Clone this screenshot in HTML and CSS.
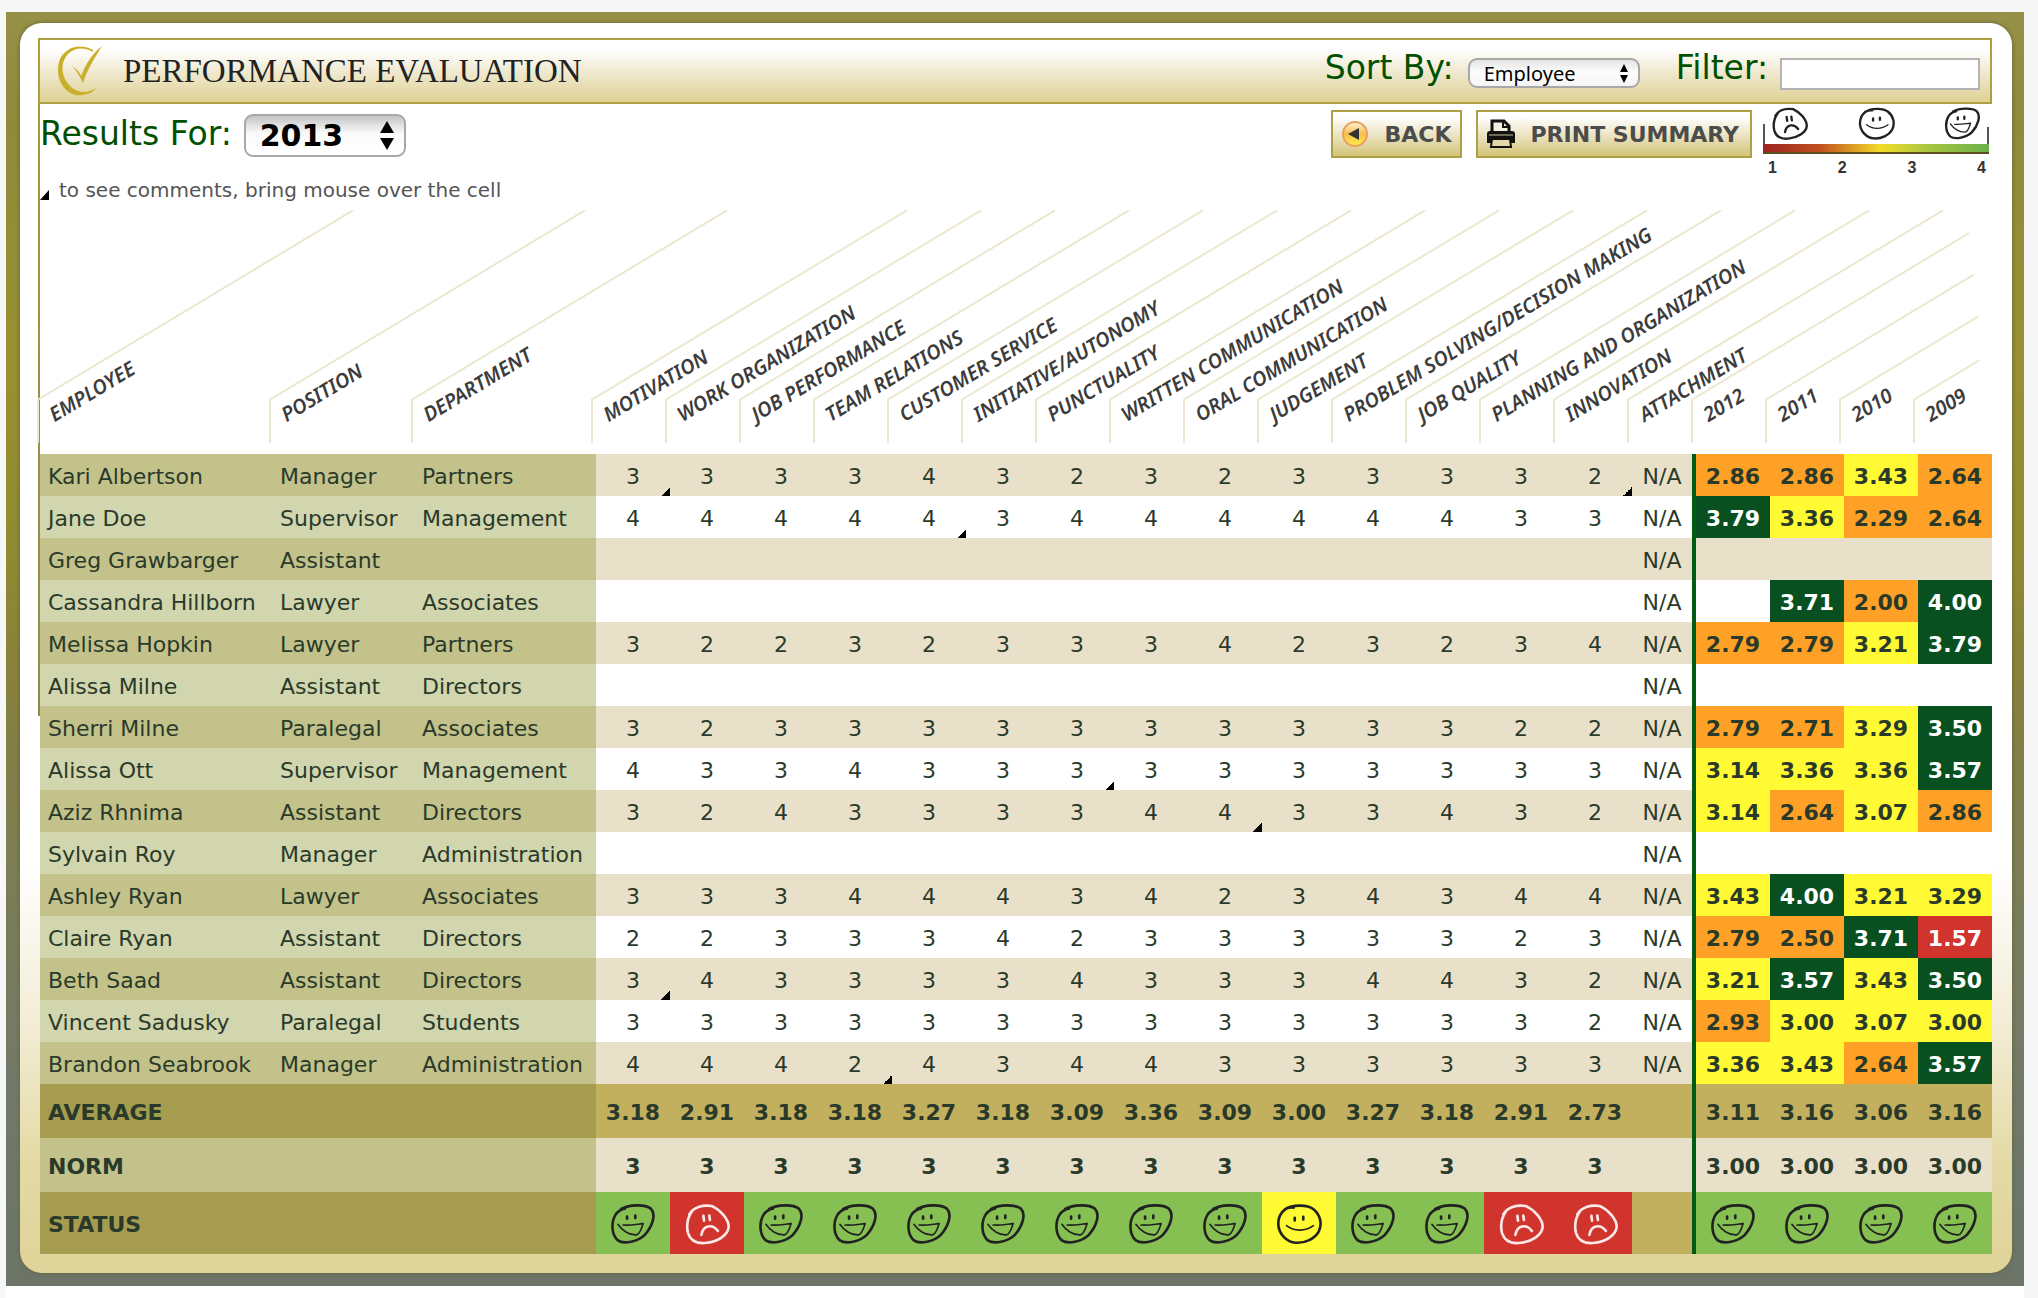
FILE: index.html
```html
<!DOCTYPE html>
<html lang="en">
  <head>
    <meta charset="utf-8">
    <meta name="viewport" content="width=device-width, initial-scale=1">
    <title>Performance Evaluation</title>
    <link rel="stylesheet" href="styles.css">
  </head>
  <body>
    <!-- Faces used in the legend and the status row -->
    <svg class="symbols" aria-hidden="true">
      <symbol id="face-happy" viewBox="0 0 140 126">
        <path d="M34 17C58 4 106 2 124 16C142 34 128 72 106 96C86 116 42 126 24 113C2 94 4 54 18 33C24 25 34 19 46 16"/>
        <path d="M52 40v7M77 37v8"/>
        <path class="thin" d="M24 64C36 82 58 97 80 96C92 94 96 74 101 62M40 66C60 68 80 64 101 62"/>
      </symbol>
      <symbol id="face-ok" viewBox="0 0 140 126">
        <path d="M26 19C50 4 94 3 114 18C134 34 142 62 130 86C118 108 88 122 60 120C32 118 10 94 7 66C6 44 14 28 30 17C38 13 46 12 54 13"/>
        <path d="M57 44v8M83 41v8"/>
        <path class="thin" d="M32 68C54 86 90 86 114 68"/>
      </symbol>
      <symbol id="face-sad" viewBox="0 0 140 126">
        <path d="M16 34C28 12 56 4 84 8C110 20 136 48 136 72C134 98 102 116 70 120C42 124 20 116 12 90C6 64 10 44 26 22"/>
        <path d="M59 38l2 15M77 37l2 14"/>
        <path d="M53 96C58 66 86 62 103 84"/>
      </symbol>
    </svg>
    <div class="page">
      <div class="panel">
        <div class="content">
          <header class="titlebar">
            <svg class="logo" viewBox="0 0 50 54" aria-hidden="true">
              <path d="M38 6C24-2 8 4 4 18C-1 36 12 54 28 51C34 50 38 48 41 44C33 49 24 50 16 43C4 32 5 14 17 7C24 3 31 4 38 8Z"/>
              <path d="M17 22C22 25 25 29 26 32C31 19 38 9 47 2C39 15 32 26 28 39C25 33 22 27 17 22Z"/>
            </svg>
            <h1>PERFORMANCE EVALUATION</h1>
            <label class="label" for="sort">Sort By:</label>
            <span class="select sort">
              <select id="sort">
                <option>Employee</option>
                <option>Position</option>
                <option>Department</option>
              </select>
            </span>
            <label class="label" for="filter">Filter:</label>
            <input id="filter" class="filter" type="text">
          </header>

          <div class="toolbar">
            <label class="label" for="year">Results For:</label>
            <span class="select year">
              <select id="year">
                <option>2013</option>
                <option>2012</option>
                <option>2011</option>
              </select>
            </span>
            <button class="button back" type="button">
              <svg width="26" height="26" viewBox="0 0 26 26" aria-hidden="true">
                <defs>
                  <linearGradient id="ball" x1="0" y1="0" x2="0" y2="1">
                    <stop offset="0" stop-color="#fdf3df"/>
                    <stop offset=".5" stop-color="#f5c04a"/>
                    <stop offset="1" stop-color="#fff04a"/>
                  </linearGradient>
                </defs>
                <circle cx="13" cy="13" r="12" fill="url(#ball)" stroke="#e9a25e" stroke-width="2"/>
                <path d="M6 13L17 7V19Z" fill="#333"/>
              </svg>
              BACK
            </button>
            <button class="button print" type="button">
              <svg width="30" height="30" viewBox="0 0 30 30" aria-hidden="true">
                <path d="M6 13V2H18L23 7V13" fill="#f3efe0" stroke="#111" stroke-width="3"/>
                <path d="M17 2V8H23" fill="none" stroke="#111" stroke-width="2"/>
                <path d="M4 12H26Q29 12 29 15V24H25V19H5V24H1V15Q1 12 4 12Z" fill="#111"/>
                <path d="M3 16H27" stroke="#cfc58f"/>
                <path d="M6 20H24L25 28H5Z" fill="#e3d9a6" stroke="#111" stroke-width="2"/>
              </svg>
              PRINT SUMMARY
            </button>
            <div class="legend">
              <div class="legend-faces">
                <svg class="face"><use href="#face-sad"/></svg>
                <svg class="face"><use href="#face-ok"/></svg>
                <svg class="face"><use href="#face-happy"/></svg>
              </div>
              <div class="legend-bar"></div>
              <div class="legend-numbers"><span>1</span><span>2</span><span>3</span><span>4</span></div>
            </div>
          </div>

          <p class="hint">to see comments, bring mouse over the cell</p>

          <table id="results">
            <colgroup>
              <col class="col-name"><col class="col-position"><col class="col-department">
              <col class="col-score" span="14">
              <col class="col-attachment">
              <col class="col-current">
              <col class="col-score" span="3">
            </colgroup>
            <thead><tr></tr></thead>
            <tbody></tbody>
            <tfoot></tfoot>
          </table>
        </div>
      </div>
    </div>
    <script src="script.js"></script>
  </body>
</html>
```
FILE: styles.css
```css
* {
  box-sizing: border-box;
}

body {
  margin: 0;
  padding: 12px 14px 12px 6px;
  background: linear-gradient(white, white) no-repeat 6px 100% / calc(100% - 20px) 12px, #f7f7f8;
  font-family: "DejaVu Sans", Verdana, sans-serif;
  font-size: 22px;
  color: #2a3a2a;
}

.symbols {
  position: absolute;
  width: 0;
  height: 0;
}

.page {
  padding: 11px 12px 13px 14px;
  background: linear-gradient(#979048 0%, #8f8a3c 8%, #989030 27%, #918a30 42%, #85803f 54%, #7b7d55 68%, #72796a 85%, #6c7468 100%);
}

.panel {
  padding: 15px 20px 19px 18px;
  border-radius: 22px;
  background: linear-gradient(white 67%, #f3edd6 80%, #e4daa6 91%, #dfd398 100%);
  box-shadow: 0 0 4px #5f6338;
}

.content {
  padding-left: 2px;
  background: linear-gradient(#a59b40, #8f8a4c) no-repeat 0 0 / 2px 678px;
}

.titlebar {
  display: flex;
  align-items: center;
  height: 66px;
  margin-left: -2px;
  padding: 0 10px 0 15px;
  border: 2px solid #aea044;
  background: linear-gradient(white 15%, #eee7cb 55%, #dfd294 100%);
}

.logo {
  width: 50px;
  height: 54px;
  fill: #c9b02c;
}

h1 {
  flex: 1;
  margin: 0 0 0 18px;
  font: 33px "Liberation Serif", "Times New Roman", serif;
  color: #222;
}

.label {
  font-size: 33px;
  line-height: 40px;
  color: #005000;
}

.titlebar .label {
  padding-bottom: 6px;
}

.select {
  position: relative;
}

.select select {
  width: 100%;
  height: 100%;
  appearance: none;
  border: 2px solid #a8a8a8;
  border-radius: 9px;
  background: linear-gradient(#e4e4e4, #fdfdfd 50%, #f4f4f4);
  color: black;
}

/* up and down arrows */
.select::before,
.select::after {
  content: "";
  position: absolute;
  right: 12px;
  border: 4px solid transparent;
  pointer-events: none;
}

.select::before {
  bottom: 55%;
  border-width: 0 4px 8px;
  border-bottom-color: black;
}

.select::after {
  top: 55%;
  border-width: 8px 4px 0;
  border-top-color: black;
}

.sort {
  width: 172px;
  height: 30px;
  margin: 4px 36px 0 14px;
}

.sort select {
  padding: 0 14px;
  font: 20px "Noto Sans", sans-serif;
}

.year {
  width: 162px;
  height: 43px;
  margin: 0 auto 0 12px;
}

.year select {
  padding: 0 14px;
  background: linear-gradient(#c4c4c4, #fbfbfb 45%, white);
  font: bold 30px "DejaVu Sans", Verdana, sans-serif;
}

.year::before {
  border-width: 0 7px 12px;
  border-bottom-color: black;
}

.year::after {
  border-width: 12px 7px 0;
  border-top-color: black;
}

.filter {
  width: 200px;
  height: 32px;
  margin: 6px 0 0 12px;
  border: 2px solid #b4b4b4;
  background: white;
  font-size: 20px;
}

.toolbar {
  display: flex;
  align-items: flex-start;
  height: 74px;
  padding-top: 6px;
}

.toolbar .label,
.toolbar .year {
  margin-top: 4px;
}

.button {
  display: flex;
  align-items: center;
  height: 48px;
  border: 2px solid #aea044;
  background: linear-gradient(white 10%, #ece5c6 50%, #d3c477 100%);
  font: bold 22px "DejaVu Sans", Verdana, sans-serif;
  white-space: nowrap;
  color: #4c4c4c;
}

.back {
  gap: 16px;
  margin-right: 14px;
  padding: 0 9px;
}

.print {
  gap: 14px;
  margin-right: 8px;
  padding: 0 11px 0 8px;
}

.legend {
  width: 232px;
}

.legend-faces {
  display: flex;
  justify-content: space-between;
  align-items: flex-start;
  height: 34px;
  margin: 0 3px;
  padding: 0 8px;
  background: linear-gradient(#555, #555) no-repeat 0 100% / 2px 20px, linear-gradient(#555, #555) no-repeat 100% 100% / 2px 17px;
}

.legend-faces .face {
  width: 37px;
  height: 33px;
  margin-top: -3px;
  stroke-width: 9px;
}

.legend-bar {
  height: 10px;
  margin: 0 3px;
  border-bottom: 2px solid #5a4d20;
  background: linear-gradient(90deg, #9c2320, #c0501f 25%, #f3dc28 52%, #a9c741 72%, #6db14a);
}

.legend-numbers {
  display: flex;
  justify-content: space-between;
  padding: 5px 6px 0 8px;
  font: bold 16px "Liberation Sans", Arial, sans-serif;
  color: #333;
}

.face {
  fill: none;
  stroke: #222;
  stroke-width: 8px;
  stroke-linecap: round;
}

.thin {
  stroke-width: 5px;
}

.hint {
  display: flex;
  align-items: center;
  gap: 10px;
  height: 24px;
  margin: 0 0 10px;
  font-size: 20px;
  color: #555;
}

.hint::before {
  content: "";
  margin-top: 10px;
  border-left: 9px solid transparent;
  border-bottom: 10px solid black;
}

#results {
  width: 100%;
  table-layout: fixed;
  border-spacing: 0;
}

.col-name {
  width: 232px;
}

.col-position {
  width: 142px;
}

.col-department {
  width: 182px;
}

.col-score {
  width: 74px;
}

.col-attachment {
  width: 60px;
}

.col-current {
  width: 78px;
}

#results th,
#results td {
  height: 42px;
  padding: 2px 0 0;
  text-align: center;
  white-space: nowrap;
}

/* slanted column headings */
#results thead th {
  position: relative;
  height: 242px;
}

.stem,
.slant {
  position: absolute;
  left: -5px;
}

.stem {
  bottom: 11px;
  height: 44px;
  border-left: 2px solid #ece8d0;
}

.slant {
  top: 187px;
  width: 368px;
  height: 36px;
  padding: 9px 0 0 3px;
  border-top: 2px solid #ece8d0;
  transform: rotate(-31deg);
  transform-origin: 0 0;
  font: italic 600 20px/22px "Noto Sans", sans-serif;
  text-align: left;
  color: #3c3c3c;
}

.text .stem,
.text .slant {
  left: -3px;
}

.current .stem,
.current .slant {
  left: -1px;
}

th:nth-last-child(4) .slant {
  width: 324px;
}

th:nth-last-child(3) .slant {
  width: 243px;
}

th:nth-last-child(2) .slant {
  width: 162px;
}

th:last-child .slant {
  width: 77px;
}

tbody tr {
  background: white;
}

tbody tr:nth-child(odd),
.norm {
  background: #e8e0c8;
}

.average,
.status {
  background: #c3b05f;
}

#results td.text,
#results tfoot th {
  padding-left: 8px;
  text-align: left;
}

tbody .text {
  background: #d2d6ae;
}

tbody tr:nth-child(odd) .text,
.norm th {
  background: #c3c28b;
}

.average th,
.status th {
  background: #a69c50;
}

#results .average > *,
#results .norm > * {
  height: 54px;
  font-weight: bold;
}

#results .status > * {
  height: 62px;
}

td.current {
  border-left: 4px solid #005c14;
}

td.year-score {
  font-weight: bold;
}

td.comment {
  background: linear-gradient(135deg, transparent 50%, black 50%) no-repeat 100% 100% / 9px 9px;
}

.orange {
  background: #ffa126;
}

.yellow {
  background: #fffa33;
}

.dark {
  background: #085020;
  color: white;
}

.red {
  background: #d0342c;
  color: white;
}

.green {
  background: #86c053;
}

td .face {
  display: block;
  width: 46px;
  height: 42px;
  margin: 0 auto;
}

.red .face {
  stroke: #fbe9e7;
}
```
FILE: script.js
```js
var headings = ["EMPLOYEE", "POSITION", "DEPARTMENT", "MOTIVATION", "WORK ORGANIZATION", "JOB PERFORMANCE",
  "TEAM RELATIONS", "CUSTOMER SERVICE", "INITIATIVE/AUTONOMY", "PUNCTUALITY", "WRITTEN COMMUNICATION",
  "ORAL COMMUNICATION", "JUDGEMENT", "PROBLEM SOLVING/DECISION MAKING", "JOB QUALITY",
  "PLANNING AND ORGANIZATION", "INNOVATION", "ATTACHMENT", "2012", "2011", "2010", "2009"];

// scores hold one digit per question, comments list the columns that have one
var employees = [
  { name: "Kari Albertson", position: "Manager", department: "Partners", scores: "33334323233332", years: ["2.86", "2.86", "3.43", "2.64"], comments: [0, 13] },
  { name: "Jane Doe", position: "Supervisor", department: "Management", scores: "44444344444433", years: ["3.79", "3.36", "2.29", "2.64"], comments: [4] },
  { name: "Greg Grawbarger", position: "Assistant", department: "", scores: "", years: [], comments: [] },
  { name: "Cassandra Hillborn", position: "Lawyer", department: "Associates", scores: "", years: ["", "3.71", "2.00", "4.00"], comments: [] },
  { name: "Melissa Hopkin", position: "Lawyer", department: "Partners", scores: "32232333423234", years: ["2.79", "2.79", "3.21", "3.79"], comments: [] },
  { name: "Alissa Milne", position: "Assistant", department: "Directors", scores: "", years: [], comments: [] },
  { name: "Sherri Milne", position: "Paralegal", department: "Associates", scores: "32333333333322", years: ["2.79", "2.71", "3.29", "3.50"], comments: [] },
  { name: "Alissa Ott", position: "Supervisor", department: "Management", scores: "43343333333333", years: ["3.14", "3.36", "3.36", "3.57"], comments: [6] },
  { name: "Aziz Rhnima", position: "Assistant", department: "Directors", scores: "32433334433432", years: ["3.14", "2.64", "3.07", "2.86"], comments: [8] },
  { name: "Sylvain Roy", position: "Manager", department: "Administration", scores: "", years: [], comments: [] },
  { name: "Ashley Ryan", position: "Lawyer", department: "Associates", scores: "33344434234344", years: ["3.43", "4.00", "3.21", "3.29"], comments: [] },
  { name: "Claire Ryan", position: "Assistant", department: "Directors", scores: "22333423333323", years: ["2.79", "2.50", "3.71", "1.57"], comments: [] },
  { name: "Beth Saad", position: "Assistant", department: "Directors", scores: "34333343334432", years: ["3.21", "3.57", "3.43", "3.50"], comments: [0] },
  { name: "Vincent Sadusky", position: "Paralegal", department: "Students", scores: "33333333333332", years: ["2.93", "3.00", "3.07", "3.00"], comments: [] },
  { name: "Brandon Seabrook", position: "Manager", department: "Administration", scores: "44424344333333", years: ["3.36", "3.43", "2.64", "3.57"], comments: [3] }
];

var averages = ["3.18", "2.91", "3.18", "3.18", "3.27", "3.18", "3.09", "3.36", "3.09", "3.00", "3.27", "3.18", "2.91", "2.73",
  "", "3.11", "3.16", "3.06", "3.16"];

var table = document.getElementById("results");

function addCell(tr, html, cls) {
  var td = document.createElement("td");
  td.innerHTML = html;
  if (cls) td.className = cls;
  tr.appendChild(td);
}

function colour(score) {
  if (!score) return "";
  if (score < 2) return "red";
  if (score < 3) return "orange";
  if (score < 3.5) return "yellow";
  return "dark";
}

for (var i = 0; i < headings.length; i++) {
  var th = document.createElement("th");
  th.scope = "col";
  th.className = i < 3 ? "text" : i == 18 ? "current" : "";
  th.innerHTML = '<span class="stem"></span><span class="slant">' + headings[i] + "</span>";
  table.tHead.rows[0].appendChild(th);
}

employees.forEach(function(e) {
  var tr = document.createElement("tr");
  addCell(tr, e.name, "text");
  addCell(tr, e.position, "text");
  addCell(tr, e.department, "text");
  for (var i = 0; i < 14; i++)
    addCell(tr, e.scores.charAt(i), e.comments.indexOf(i) > -1 ? "comment" : "");
  addCell(tr, "N/A");
  for (var i = 0; i < 4; i++)
    addCell(tr, e.years[i] || "", "year-score " + (i == 0 ? "current " : "") + colour(e.years[i]));
  table.tBodies[0].appendChild(tr);
});

function addFooter(title, cls, cell) {
  var tr = document.createElement("tr");
  tr.className = cls;
  tr.innerHTML = '<th scope="row" colspan="3">' + title + "</th>";
  for (var i = 0; i < averages.length; i++)
    cell(tr, i, i == 15 ? "current " : "");
  table.tFoot.appendChild(tr);
}

addFooter("AVERAGE", "average", function(tr, i, cls) {
  addCell(tr, averages[i], cls);
});
addFooter("NORM", "norm", function(tr, i, cls) {
  addCell(tr, i == 14 ? "" : i > 14 ? "3.00" : "3", cls);
});
addFooter("STATUS", "status", function(tr, i, cls) {
  if (!averages[i]) return addCell(tr, "");
  var face = averages[i] > 3 ? "happy" : averages[i] == 3 ? "ok" : "sad";
  var bg = { happy: "green", ok: "yellow", sad: "red" }[face];
  addCell(tr, '<svg class="face"><use href="#face-' + face + '"/></svg>', cls + bg);
});
```
